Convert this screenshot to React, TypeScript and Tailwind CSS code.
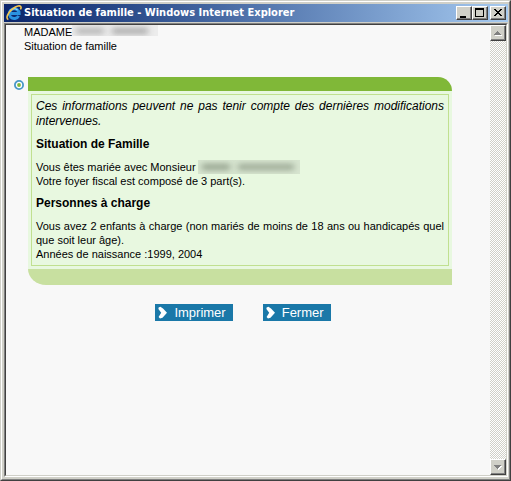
import type { ReactNode } from 'react';

const bevel =
  'flex items-center justify-center bg-[#d0d0c8] border border-t-white border-l-white border-r-[#404040] border-b-[#404040] shadow-[inset_-1px_-1px_0_#808080]';

function CaptionButton({ label, children }: { label: string; children: ReactNode }) {
  return (
    <button type="button" aria-label={label} className={`${bevel} h-[14px] w-4`}>
      <svg width="14" height="12" viewBox="0 0 14 12" shapeRendering="crispEdges" aria-hidden="true">
        {children}
      </svg>
    </button>
  );
}

function ScrollButton({ label, down = false }: { label: string; down?: boolean }) {
  return (
    <button type="button" aria-label={label} className={`${bevel} h-4 w-4 shrink-0`}>
      <svg width="14" height="14" viewBox="0 0 14 14" shapeRendering="crispEdges" aria-hidden="true">
        {down ? (
          <>
            <path d="M4 6h7v1h-1v1H9v1H8v1H7V9H6V8H5V7H4z" fill="#fff" />
            <path d="M3 5h7v1H9v1H8v1H7v1H6V8H5V7H4V6H3z" fill="#808080" />
          </>
        ) : (
          <>
            <path d="M4 9h7v1H4z" fill="#fff" />
            <path d="M6 5h1v1h1v1h1v1h1v1H3V8h1V7h1V6h1z" fill="#808080" />
          </>
        )}
      </svg>
    </button>
  );
}

function ActionButton({ children }: { children: ReactNode }) {
  return (
    <button type="button" className="flex h-[17px] items-center gap-[7px] bg-[#1a78a8] pr-[7px] pl-[3px] text-[13px] leading-4 text-white">
      <svg width="9" height="13" viewBox="0 0 9 13" aria-hidden="true">
        <path d="M.6 1.4L2.4.7L5 2.4L9 6.7L4.5 11.8L2 12.4L.6 11L3.2 6.7L.4 3z" fill="#fff" />
      </svg>
      {children}
    </button>
  );
}

function ExplorerIcon() {
  return (
    <svg width="16" height="16" viewBox="0 0 16 16" aria-hidden="true">
      <path d="M12.6 10.8A4.9 4.9 0 1 1 13.1 8.6H4.8" fill="none" stroke="#2b93e0" strokeWidth="3" />
      <path d="M3.6 7A4.8 4.8 0 0 1 11.6 5.2" fill="none" stroke="#9be0fc" strokeWidth="1.2" />
      <path d="M2.4 14.6C-.6 13.4 1.8 7.4 6.4 4C10.4 1 14.4-.2 15 2C15.2 2.8 14.8 3.8 14.4 4.4" fill="none" stroke="#f3c550" strokeWidth="1.6" />
    </svg>
  );
}

export default function App() {
  return (
    <div className="flex min-h-screen w-full flex-col border border-t-[#d0d0c8] border-l-[#d0d0c8] border-r-[#404040] border-b-[#404040] bg-[#d0d0c8] font-['Liberation_Sans',Arial,sans-serif] text-black">
      <div className="flex grow flex-col border border-t-white border-l-white border-r-[#808080] border-b-[#808080] py-0.5 pr-px pl-0.5">
        <header className="flex h-[18px] items-center bg-linear-to-r from-[#0a246a] to-[#a6caf0] pr-0.5 pl-0.5">
          <ExplorerIcon />
          <h1 className="grow pl-0.5 font-['DejaVu_Sans_Condensed','DejaVu_Sans',sans-serif] text-[11px] leading-4 font-bold whitespace-nowrap text-white">
            Situation de famille - Windows Internet Explorer
          </h1>
          <div className="flex">
            <CaptionButton label="Réduire">
              <path d="M3 9h6v2H3z" />
            </CaptionButton>
            <CaptionButton label="Agrandir">
              <path d="M2 1h9v9H2zM3 3v6h7V3z" fillRule="evenodd" />
            </CaptionButton>
            <div className="ml-0.5">
              <CaptionButton label="Fermer la fenêtre">
                <path d="M3 2h2v1h1v1h2V3h1V2h2v1h-1v1H9v1H8v1h1v1h1v1h1v1H9V8H8V7H6v1H5v1H3V8h1V7h1V6h1V5H5V4H4V3H3z" />
              </CaptionButton>
            </div>
          </div>
        </header>

        <div className="mt-px flex grow border border-t-[#808080] border-l-[#808080] border-r-white border-b-white">
          <div className="flex grow border border-t-[#404040] border-l-[#404040] border-r-[#d0d0c8] border-b-[#d0d0c8] bg-[#f8f8f8]">
            <main className="min-w-0 grow pr-[38px] pl-2">
              <div className="pl-[10px] text-[11px] leading-[14px]">
                <p className="flex items-start">
                  MADAME
                  <span className="flex h-[11px] w-[86px] items-center overflow-hidden bg-[#ececec]">
                    <span className="ml-1 h-1 w-7 bg-[#999999] blur-[3px]" />
                    <span className="ml-2 h-1 w-9 bg-[#888888] blur-[3px]" />
                  </span>
                </p>
                <p>Situation de famille</p>
              </div>

              <section className="mt-6 flex items-start gap-1">
                <svg width="10" height="10" viewBox="0 0 10 10" className="mt-[3px] shrink-0" aria-hidden="true">
                  <circle cx="5" cy="5" r="4.1" fill="#fff" stroke="#4898c8" strokeWidth="1.8" />
                  <circle cx="5" cy="5" r="1.9" fill="#80b838" />
                </svg>
                <div className="min-w-0 grow">
                  <div className="h-[14px] rounded-tr-[14px] bg-[#80b838]" />
                  <div className="bg-[#e8f8e0] p-[3px]">
                    <div className="border border-[#c0e090] px-1 pt-1 pb-1 text-[11px] leading-[14px]">
                      <p className="text-justify text-[12px] leading-[15px] italic">
                        Ces informations peuvent ne pas tenir compte des dernières modifications intervenues.
                      </p>
                      <h2 className="mt-2 text-[12px] leading-[15px] font-bold">Situation de Famille</h2>
                      <p className="mt-2 flex items-center">
                        <span>Vous êtes mariée avec Monsieur</span>
                        <span className="ml-0.5 flex h-[14px] w-[102px] items-center overflow-hidden bg-[#d7e5d0]">
                          <span className="ml-1 h-1 w-7 bg-[#73806c] blur-[3px]" />
                          <span className="ml-2 h-1 w-14 bg-[#7d8976] blur-[3px]" />
                        </span>
                      </p>
                      <p>Votre foyer fiscal est composé de 3 part(s).</p>
                      <h2 className="mt-2 text-[12px] leading-[15px] font-bold">Personnes à charge</h2>
                      <p className="mt-2 text-justify">
                        Vous avez 2 enfants à charge (non mariés de moins de 18 ans ou handicapés quel que soit leur âge).
                      </p>
                      <p>Années de naissance :1999, 2004</p>
                    </div>
                  </div>
                  <div className="h-4 rounded-bl-[18px_16px] bg-[#c8e0a0]" />
                </div>
              </section>

              <div className="mt-[19px] flex justify-center gap-[30px] pl-5">
                <ActionButton>Imprimer</ActionButton>
                <ActionButton>Fermer</ActionButton>
              </div>
            </main>

            <aside className="flex w-4 shrink-0 flex-col bg-[conic-gradient(#ffffff_25%,#d0d0c8_0_50%,#ffffff_0_75%,#d0d0c8_0)] bg-size-[2px_2px]">
              <ScrollButton label="Défiler vers le haut" />
              <div className="grow" />
              <ScrollButton label="Défiler vers le bas" down />
            </aside>
          </div>
        </div>
      </div>
    </div>
  );
}
